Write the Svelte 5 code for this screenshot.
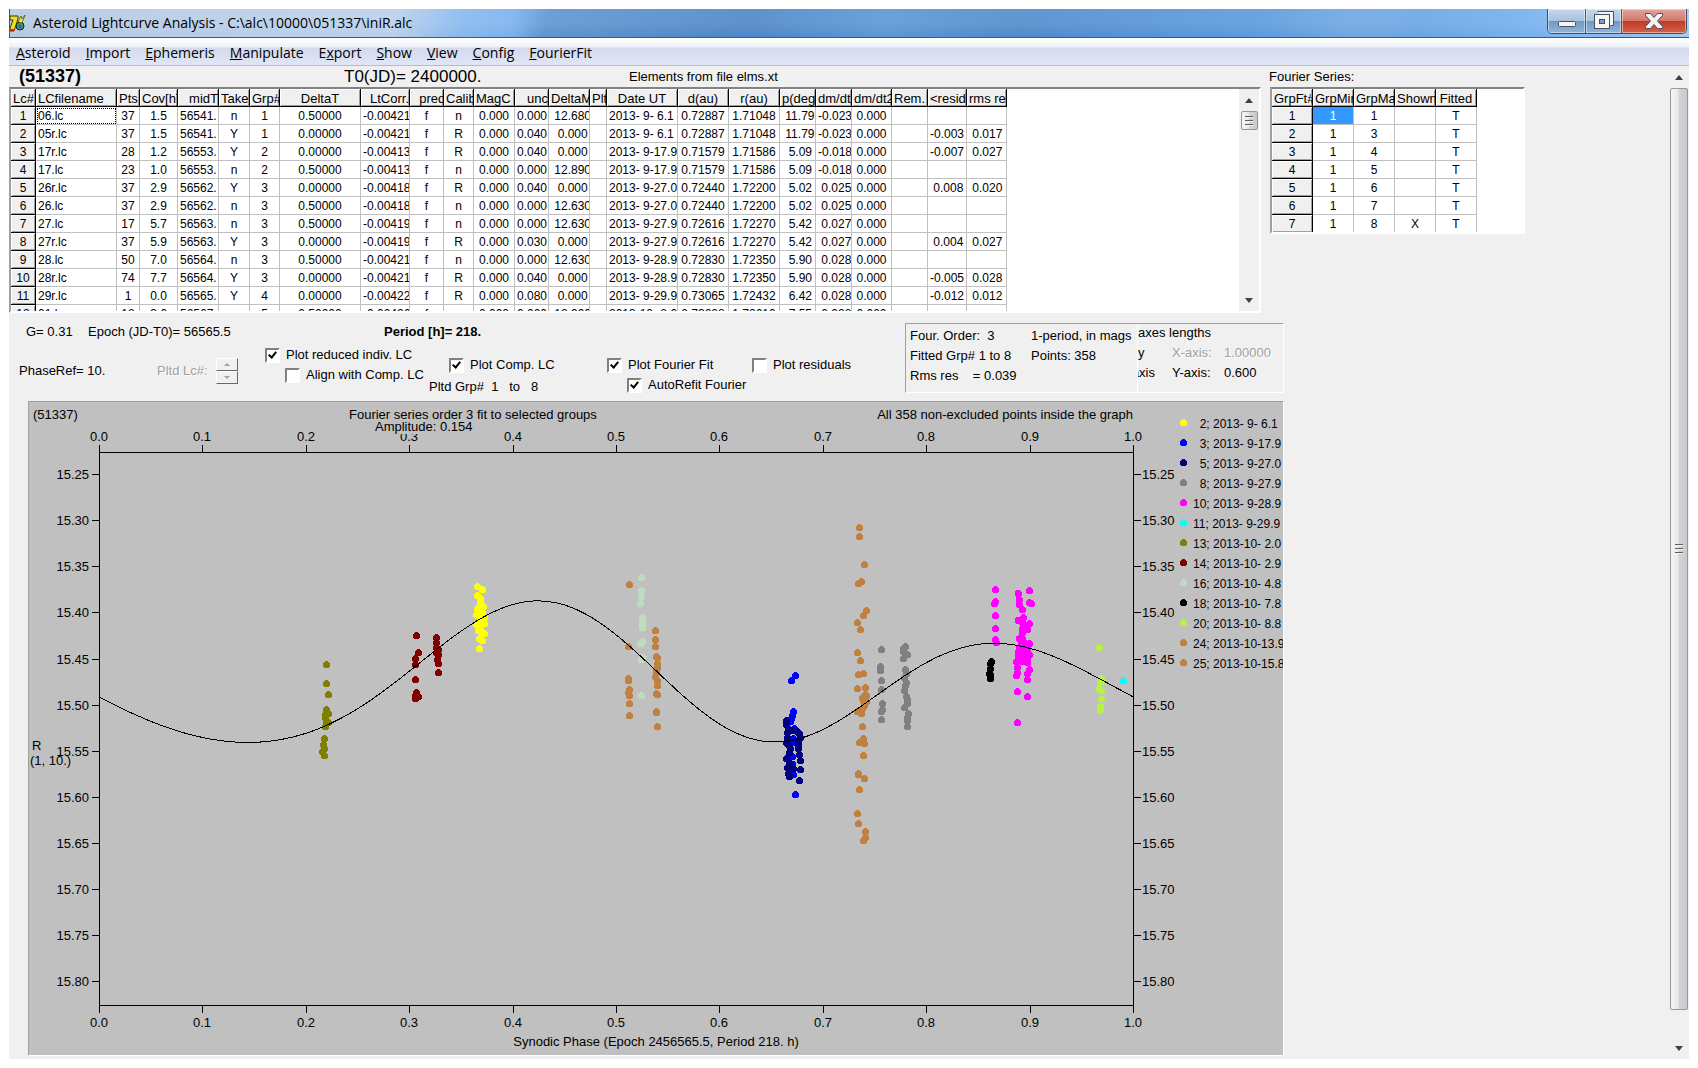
<script lang="ts">
    const menu = ["Asteroid", "Import", "Ephemeris", "Manipulate", "Export", "Show", "View", "Config", "FourierFit"];
    // index of the underlined accelerator letter in each menu entry
    const accel = [0, 0, 0, 0, 1, 0, 0, 0, 0];

    const lcCols = [
        { title: "Lc#", width: 25 },
        { title: "LCfilename", width: 81 },
        { title: "Pts", width: 23, align: "center" },
        { title: "Cov[h]", width: 38, align: "center" },
        { title: "midT", width: 41, head: "right" },
        { title: "Taken", width: 31, align: "center" },
        { title: "Grp#", width: 30, align: "center" },
        { title: "DeltaT", width: 81, align: "center", head: "center" },
        { title: "LtCorr.", width: 49, head: "right" },
        { title: "  pred", width: 34, align: "center" },
        { title: "Calib", width: 30, align: "center" },
        { title: "MagC", width: 41, align: "center" },
        { title: "unc", width: 34, head: "right" },
        { title: "DeltaM", width: 41 },
        { title: "Plt", width: 17 },
        { title: "Date UT", width: 71, head: "center" },
        { title: "d(au)", width: 51, align: "center", head: "center" },
        { title: "r(au)", width: 51, align: "center", head: "center" },
        { title: "p(deg)", width: 36 },
        { title: "dm/dt", width: 36 },
        { title: "dm/dt2", width: 40, align: "center" },
        { title: "Rem.", width: 36 },
        { title: "<resid>", width: 39 },
        { title: "rms res", width: 40 },
    ];

    const lcRows = [
        "1|06.lc|37|1.5|56541.|n|1|0.50000|-0.00421|f|n|0.000|0.000| 12.680||2013- 9- 6.1|0.72887|1.71048| 11.79|-0.023|0.000|||",
        "2|05r.lc|37|1.5|56541.|Y|1|0.00000|-0.00421|f|R|0.000|0.040|  0.000||2013- 9- 6.1|0.72887|1.71048| 11.79|-0.023|0.000||-0.003| 0.017",
        "3|17r.lc|28|1.2|56553.|Y|2|0.00000|-0.00413|f|R|0.000|0.040|  0.000||2013- 9-17.9|0.71579|1.71586|  5.09|-0.018|0.000||-0.007| 0.027",
        "4|17.lc|23|1.0|56553.|n|2|0.50000|-0.00413|f|n|0.000|0.000| 12.890||2013- 9-17.9|0.71579|1.71586|  5.09|-0.018|0.000|||",
        "5|26r.lc|37|2.9|56562.|Y|3|0.00000|-0.00418|f|R|0.000|0.040|  0.000||2013- 9-27.0|0.72440|1.72200|  5.02| 0.025|0.000|| 0.008| 0.020",
        "6|26.lc|37|2.9|56562.|n|3|0.50000|-0.00418|f|n|0.000|0.000| 12.630||2013- 9-27.0|0.72440|1.72200|  5.02| 0.025|0.000|||",
        "7|27.lc|17|5.7|56563.|n|3|0.50000|-0.00419|f|n|0.000|0.000| 12.630||2013- 9-27.9|0.72616|1.72270|  5.42| 0.027|0.000|||",
        "8|27r.lc|37|5.9|56563.|Y|3|0.00000|-0.00419|f|R|0.000|0.030|  0.000||2013- 9-27.9|0.72616|1.72270|  5.42| 0.027|0.000|| 0.004| 0.027",
        "9|28.lc|50|7.0|56564.|n|3|0.50000|-0.00421|f|n|0.000|0.000| 12.630||2013- 9-28.9|0.72830|1.72350|  5.90| 0.028|0.000|||",
        "10|28r.lc|74|7.7|56564.|Y|3|0.00000|-0.00421|f|R|0.000|0.040|  0.000||2013- 9-28.9|0.72830|1.72350|  5.90| 0.028|0.000||-0.005| 0.028",
        "11|29r.lc|1|0.0|56565.|Y|4|0.00000|-0.00422|f|R|0.000|0.080|  0.000||2013- 9-29.9|0.73065|1.72432|  6.42| 0.028|0.000||-0.012| 0.012",
        "12|01.lc|18|3.6|56567.|n|5|0.50000|-0.00426|f|n|0.000|0.000| 12.900||2013-10- 2.0|0.73628|1.72610|  7.55| 0.028|0.000|||",
    ].map((row) => row.split("|"));

    const fourierCols = ["GrpFt#", "GrpMin", "GrpMax", "Shown", "Fitted"];
    const fourierRows = [
        ["1", "1", "1", "", "T"],
        ["2", "1", "3", "", "T"],
        ["3", "1", "4", "", "T"],
        ["4", "1", "5", "", "T"],
        ["5", "1", "6", "", "T"],
        ["6", "1", "7", "", "T"],
        ["7", "1", "8", "X", "T"],
    ];

    const legend = [
        { label: "  2; 2013- 9- 6.1", color: "#ffff00" },
        { label: "  3; 2013- 9-17.9", color: "#0000ff" },
        { label: "  5; 2013- 9-27.0", color: "#000080" },
        { label: "  8; 2013- 9-27.9", color: "#808080" },
        { label: "10; 2013- 9-28.9", color: "#ff00ff" },
        { label: "11; 2013- 9-29.9", color: "#00ffff" },
        { label: "13; 2013-10- 2.0", color: "#808000" },
        { label: "14; 2013-10- 2.9", color: "#800000" },
        { label: "16; 2013-10- 4.8", color: "#c0dcc0" },
        { label: "18; 2013-10- 7.8", color: "#000000" },
        { label: "20; 2013-10- 8.8", color: "#b9f046" },
        { label: "24; 2013-10-13.9", color: "#c08040" },
        { label: "25; 2013-10-15.8", color: "#c08040" },
    ];

    // observations, in the units of the chart's viewBox
    const observations = [
        {
            color: "#ffff00",
            points: "477,586 482,589 477,595 480,598 480,602 480,605 483,606 477,608 480,611 482,612 476,614 479,616 484,617 480,620 483,621 476,624 484,623 480,626 478,630 481,631 484,633 479,638 482,640 479,648",
        },
        {
            color: "#0000ff",
            points: "795,675 791,680 793,711 792,715 791,718 790,721 794,728 793,738 792,742 792,756 792,764 793,774 795,794",
        },
        {
            color: "#000080",
            points: "786,720 786,724 788,728 793,730 797,731 799,733 800,737 787,732 787,737 786,742 788,744 790,748 798,741 798,745 798,748 789,752 799,754 800,760 786,758 789,762 787,767 791,768 793,768 800,769 788,773 789,776 799,780",
        },
        {
            color: "#808080",
            points: "881,649 880,666 880,670 881,680 881,689 882,703 882,709 881,711 881,719 905,646 903,648 903,651 907,654 903,658 905,669 906,673 904,677 906,682 905,685 904,690 906,696 907,699 907,703 904,707 908,713 907,717 907,720 907,726",
        },
        {
            color: "#ff00ff",
            points: "995,589 995,601 994,603 995,615 995,628 995,639 996,642 1018,593 1019,599 1019,604 1022,609 1029,590 1029,602 1031,603 1018,620 1023,617 1022,622 1029,623 1025,625 1022,628 1027,629 1022,632 1019,638 1022,638 1021,642 1025,643 1029,643 1019,647 1023,647 1027,648 1018,652 1023,652 1018,654 1022,656 1029,654 1018,657 1027,658 1016,661 1022,661 1027,662 1017,667 1029,669 1017,672 1027,673 1016,675 1027,679 1017,691 1027,696 1017,722",
        },
        { color: "#00ffff", points: "1123,680" },
        {
            color: "#808000",
            points: "326,664 326,683 328,694 326,709 325,714 328,713 325,717 326,721 328,722 325,726 324,738 323,744 324,748 322,751 324,755",
        },
        {
            color: "#800000",
            points: "416,635 418,652 415,658 415,664 415,679 416,692 415,695 418,696 415,698 436,637 436,642 436,647 438,649 436,652 438,654 437,659 438,663 438,672",
        },
        {
            color: "#c0dcc0",
            points: "641,577 641,590 641,596 640,603 642,617 642,621 642,625 642,627 642,641 640,643 642,657 641,659 641,695",
        },
        { color: "#000000", points: "991,661 990,663 990,668 989,673 990,674 990,678" },
        {
            color: "#b9f046",
            points: "1099,647 1101,678 1100,681 1102,681 1099,688 1101,690 1101,698 1100,706 1100,710",
        },
        {
            color: "#c08040",
            points: "629,584 628,646 628,678 628,680 629,689 628,692 629,695 629,703 629,715 655,630 655,639 655,646 656,656 657,657 657,663 657,667 656,669 656,671 655,676 657,680 657,685 656,693 657,694 656,711 656,712 657,726 859,527 859,536 864,564 861,581 858,583 866,610 863,615 857,622 860,629 857,652 860,660 858,674 863,673 865,687 857,688 865,694 866,695 862,697 863,700 866,701 864,705 862,708 857,711 859,710 861,713 862,726 863,738 859,742 864,743 863,755 858,773 858,774 864,778 859,789 857,813 858,823 865,831 865,837 863,840",
        },
    ];

    const plot = { left: 99, right: 1133, top: 452, bottom: 1005 };
    const xTicks = Array.from({ length: 11 }, (_, i) => i / 10);
    const yTicks = Array.from({ length: 12 }, (_, i) => 15.25 + i * 0.05);

    const px = (phase: number) => Math.round(plot.left + phase * (plot.right - plot.left));
    const py = (mag: number) => 474.3 + (mag - 15.25) * 921.3;

    // third order Fourier fit: [cos, sin] per harmonic
    const mean = 15.4779;
    const harmonics = [
        [0.02317, -0.00129],
        [-0.02008, 0.05948],
        [0.01047, -0.0078],
    ];

    function fit(phase: number) {
        return harmonics.reduce((sum, [a, b], i) => {
            const t = 2 * Math.PI * (i + 1) * phase;
            return sum + a * Math.cos(t) + b * Math.sin(t);
        }, mean);
    }

    const curve = Array.from({ length: 201 }, (_, i) => i / 200)
        .map((p) => `${(plot.left + p * (plot.right - plot.left)).toFixed(1)},${py(fit(p)).toFixed(1)}`)
        .join(" ");

    let reduced = $state(true);
    let align = $state(false);
    let comp = $state(true);
    let fourier = $state(true);
    let autoRefit = $state(true);
    let residuals = $state(false);
</script>

<div class="window">
    <header class="titlebar">
        <svg class="appIcon" width="16" height="20" viewBox="0 0 16 20">
            <path d="M0 3h8v3l-4 12H0v-3l3-8H0z" fill="#e8e020" stroke="#3a3a10" />
            <path d="M0 17h5" stroke="#c03020" stroke-width="2" />
            <circle cx="10" cy="13" r="4" fill="#3f9a5a" stroke="#123" />
            <path d="M9 12l2 3" stroke="#3050c0" stroke-width="2" />
            <path d="M8 9l3-6 1 3 3-4-3 8z" fill="#f4ec30" stroke="#444410" stroke-width=".7" />
        </svg>
        <span class="title">Asteroid Lightcurve Analysis - C:\alc\10000\051337\iniR.alc</span>
        <div class="winButtons">
            <button class="min" aria-label="Minimize">
                <svg width="20" height="20" viewBox="0 0 20 20">
                    <rect x="1.5" y="10.5" width="17" height="5" rx="1" fill="#f4f4f4" stroke="#4a5060" />
                </svg>
            </button>
            <button class="restore" aria-label="Restore">
                <svg width="20" height="20" viewBox="0 0 20 20">
                    <path d="M3.500 .5h16v14h-3" fill="#f4f4f4" stroke="#4a5060" />
                    <rect x=".5" y="3.500" width="15" height="14" fill="#f4f4f4" stroke="#4a5060" />
                    <rect x="5.500" y="8.500" width="5" height="4" fill="#7f9cc0" stroke="#4a5060" />
                </svg>
            </button>
            <button class="close" aria-label="Close">
                <svg width="20" height="18" viewBox="0 0 20 18">
                    <path
                        d="M1.500 1.500h5l3.500 4 3.500-4h5v2L13.500 9l5 5.500v2h-5l-3.500-4-3.500 4h-5v-2l5-5.500-5-5.500z"
                        fill="#f4f4f4"
                        stroke="#4a5060"
                    />
                </svg>
            </button>
        </div>
    </header>

    <nav class="menubar">
        {#each menu as item, i}
            <button>{item.slice(0, accel[i])}<u>{item[accel[i]]}</u>{item.slice(accel[i] + 1)}</button>
        {/each}
    </nav>

    <div class="client">
        <main>
            <div class="top">
                <section class="lightcurves">
                    <div class="heading">
                        <h1>(51337)</h1>
                        <span class="t0">T0(JD)= 2400000.</span>
                        <span>Elements from file elms.xt</span>
                    </div>
                    <div class="gridBox lcBox">
                        <div class="clip">
                            <table>
                                <colgroup>
                                    {#each lcCols as col}
                                        <col style:width={`${col.width}px`} />
                                    {/each}
                                </colgroup>
                                <thead>
                                    <tr>
                                        {#each lcCols as col}
                                            <th class={col.head}>{col.title}</th>
                                        {/each}
                                    </tr>
                                </thead>
                                <tbody>
                                    {#each lcRows as row, r}
                                        <tr>
                                            {#each row as cell, c}
                                                {#if c === 0}
                                                    <th class="center" scope="row">{cell}</th>
                                                {:else}
                                                    <td class={[lcCols[c].align, r === 0 && c === 1 && "focused"]}>{cell}</td>
                                                {/if}
                                            {/each}
                                        </tr>
                                    {/each}
                                </tbody>
                            </table>
                        </div>
                        <div class="scrollbar">
                            <span class="arrow up"></span>
                            <span class="thumb"><i></i></span>
                            <span class="arrow down"></span>
                        </div>
                    </div>
                </section>

                <section class="fourier">
                    <h2>Fourier Series:</h2>
                    <div class="gridBox fourierBox">
                        <div class="clip">
                            <table>
                                <colgroup>
                                    {#each fourierCols as _}
                                        <col class="fourierCol" />
                                    {/each}
                                </colgroup>
                                <thead>
                                    <tr>
                                        {#each fourierCols as col}
                                            <th class={col === "Fitted" ? "center" : ""}>{col}</th>
                                        {/each}
                                    </tr>
                                </thead>
                                <tbody>
                                    {#each fourierRows as row, r}
                                        <tr>
                                            <th class="center" scope="row">{row[0]}</th>
                                            {#each row.slice(1) as cell, c}
                                                <td class={["center", r === 0 && c === 0 && "selected"]}>{cell}</td>
                                            {/each}
                                        </tr>
                                    {/each}
                                </tbody>
                            </table>
                        </div>
                    </div>
                </section>
            </div>

            <div class="bottom">
                <div class="controls">
                    <div class="options">
                        <div class="summary">
                            <span class="g">G= 0.31</span>
                            <span class="epoch">Epoch (JD-T0)= 56565.5</span>
                            <b>Period [h]= 218.</b>
                        </div>
                        <div class="checks">
                            <div class="phase">
                                <span class="phaseRef">PhaseRef= 10.</span>
                                <span class="disabled">Pltd Lc#:</span>
                                <span class="spin">
                                    <button aria-label="Next lightcurve" disabled><i class="tri up"></i></button>
                                    <button aria-label="Previous lightcurve" disabled><i class="tri down"></i></button>
                                </span>
                            </div>
                            <div class="stack reduced">
                                <label><input type="checkbox" bind:checked={reduced} />Plot reduced indiv. LC</label>
                                <label class="indent"><input type="checkbox" bind:checked={align} />Align with Comp. LC</label>
                            </div>
                            <div class="stack comp">
                                <label class="indent"><input type="checkbox" bind:checked={comp} />Plot Comp. LC</label>
                                <span class="groups">Pltd Grp#  1   to   8</span>
                            </div>
                            <div class="stack fit">
                                <label><input type="checkbox" bind:checked={fourier} />Plot Fourier Fit</label>
                                <label class="indent"><input type="checkbox" bind:checked={autoRefit} />AutoRefit Fourier</label>
                            </div>
                            <div class="stack residuals">
                                <label><input type="checkbox" bind:checked={residuals} />Plot residuals</label>
                            </div>
                        </div>
                    </div>

                    <div class="info">
                        <div class="result">
                            <span>Four. Order:  3</span><span>1-period, in mags</span>
                            <span>Fitted Grp# 1 to 8</span><span>Points: 358</span>
                            <span>Rms res    = 0.039</span>
                        </div>
                        <div class="axes">
                            <span class="wide">axes lengths</span>
                            <span>y</span><span class="disabled">X-axis:</span><span class="disabled">1.00000</span>
                            <span class="cut">axis</span><span>Y-axis:</span><span>0.600</span>
                        </div>
                    </div>
                </div>

                <div class="graph">
                    <svg viewBox="29 402 1254 653">
                        <g class="axis">
                            <rect x="99.5" y="452.5" width="1034" height="553" fill="none" />
                            {#each xTicks as t}
                                <path d={`M${px(t) + 0.5} 445v7M${px(t) + 0.5} 1005v8`} />
                            {/each}
                            {#each yTicks as t}
                                <path d={`M92 ${Math.round(py(t)) + 0.5}h8M1133 ${Math.round(py(t)) + 0.5}h8`} />
                            {/each}
                        </g>

                        <text x="33" y="419">(51337)</text>
                        <text x="349" y="419">Fourier series order 3 fit to selected groups</text>
                        <text x="1133" y="419" text-anchor="end">All 358 non-excluded points inside the graph</text>

                        {#each xTicks as t}
                            <text x={px(t)} y="441" text-anchor="middle">{t.toFixed(1)}</text>
                            <text x={px(t)} y="1027" text-anchor="middle">{t.toFixed(1)}</text>
                        {/each}
                        {#each yTicks as t}
                            <text x="89" y={Math.round(py(t)) + 5} text-anchor="end">{t.toFixed(2)}</text>
                            <text x="1142" y={Math.round(py(t)) + 5}>{t.toFixed(2)}</text>
                        {/each}

                        <rect class="mask" x="373" y="420" width="101" height="14" />
                        <text x="375" y="431">Amplitude: 0.154</text>
                        <text x="32" y="750">R</text>
                        <text x="30" y="765">(1, 10.)</text>
                        <text x="656" y="1046" text-anchor="middle">Synodic Phase (Epoch 2456565.5, Period 218. h)</text>

                        {#each observations as obs}
                            <g fill={obs.color} class="dots">
                                {#each obs.points.split(" ") as point}
                                    {@const [cx, cy] = point.split(",").map(Number)}
                                    <circle cx={cx + 0.5} cy={cy + 0.5} r="3.5" />
                                {/each}
                            </g>
                        {/each}
                        <polyline class="curve" points={curve} />

                        {#each legend as entry, i}
                            <circle class="dots" cx="1183.5" cy={422.5 + i * 20} r="3.5" fill={entry.color} />
                            <text class="entry" x="1193" y={428 + i * 20}>{entry.label}</text>
                        {/each}
                    </svg>
                </div>
            </div>
        </main>

        <div class="scrollbar page">
            <span class="arrow up"></span>
            <span class="thumb"><i></i></span>
            <span class="arrow down"></span>
        </div>
    </div>
</div>

<style>
    :global(body) {
        background: #fff;
    }

    .window {
        box-sizing: border-box;
        display: flex;
        flex-direction: column;
        min-height: 100vh;
        padding: 9px;
        font: 13px/16px "Liberation Sans", Arial, sans-serif;
        color: #000;
    }

    button {
        margin: 0;
        padding: 0;
        border: none;
        background: none;
        color: inherit;
        font: inherit;
    }

    .titlebar {
        display: flex;
        align-items: center;
        gap: 9px;
        height: 29px;
        border-bottom: 1px solid #47586e;
        border-left: 1px solid #47586e;
        box-sizing: border-box;
        background:
            linear-gradient(rgba(255, 255, 255, 0.1), rgba(255, 255, 255, 0.1) 50%, transparent),
            linear-gradient(
                100deg,
                #b4c9e2 0,
                #b9cfea 23%,
                #86b7ee 27%,
                #7ab0ee 30%,
                #5d93cf 32%,
                #4d86c8 44%,
                #5b95d6 52%,
                #4f8acb 60%,
                #5a99dc 74%,
                #6fa6e2 80%,
                #6aa4e3 84%,
                #74aeee 90%,
                #a5c8ee 100%
            );
    }

    .appIcon {
        flex: none;
    }

    .title {
        flex: 1;
        margin-left: -2px;
        font: 14px/20px "Open Sans", "Noto Sans", sans-serif;
        white-space: nowrap;
    }

    .winButtons {
        display: flex;
        align-self: flex-start;
        margin-right: 2px;
        height: 24px;
        border: 1px solid #3f4d63;
        border-top: none;
        border-radius: 0 0 5px 5px;
        overflow: hidden;
    }

    .winButtons button {
        display: flex;
        justify-content: center;
        align-items: center;
        width: 38px;
        border-right: 1px solid #4a5a74;
        background: linear-gradient(#c3d6ec, #a9c3df 48%, #7397bf 50%, #8fb4dc);
        box-shadow: inset 0 0 0 1px rgba(255, 255, 255, 0.45);
    }

    .winButtons .restore {
        width: 36px;
    }

    .winButtons .close {
        width: 64px;
        border-right: none;
        background: linear-gradient(#e3a599, #d2796b 48%, #c13a22 50%, #d5614b);
    }

    .menubar {
        display: flex;
        gap: 15px;
        height: 27px;
        padding: 0 7px;
        border-bottom: 1px solid #b6bccc;
        background: linear-gradient(#fff, #eef1f9 9px, #d4daed 10px, #e1e6f6);
        font: 14px/29px "Open Sans", "Noto Sans", sans-serif;
    }

    .client {
        flex: 1;
        display: flex;
        background: #f0f0f0;
    }

    main {
        flex: 1;
        min-width: 0;
    }

    .top {
        display: flex;
        gap: 8px;
    }

    .lightcurves {
        flex: 1;
        min-width: 0;
    }

    .fourier {
        width: 400px;
    }

    .heading {
        display: flex;
        align-items: center;
        height: 21px;
        padding-left: 10px;
        white-space: pre;
    }

    h1 {
        width: 325px;
        margin: 0;
        font-size: 18px;
        line-height: 21px;
    }

    h2 {
        margin: 0;
        font-size: 13px;
        font-weight: 400;
        line-height: 21px;
    }

    .t0 {
        width: 285px;
        font-size: 17px;
    }

    .gridBox {
        display: flex;
        box-sizing: border-box;
        border: 2px solid;
        border-color: #828282 #fff #fff #a0a0a0;
        background: #fff;
        overflow: hidden;
    }

    .lcBox {
        height: 226px;
    }

    .fourierBox {
        width: 255px;
        height: 147px;
        margin-left: 1px;
    }

    .clip {
        flex: 1;
        min-width: 0;
        overflow: hidden;
    }

    table {
        width: 0;
        table-layout: fixed;
        border-spacing: 0;
    }

    .fourierCol {
        width: 41px;
    }

    td,
    th {
        box-sizing: border-box;
        height: 18px;
        padding: 2px 0 0 2px;
        border-right: 1px solid #c0c0c0;
        border-bottom: 1px solid #c0c0c0;
        overflow: hidden;
        font-size: 12px;
        font-weight: 400;
        line-height: 15px;
        text-align: left;
        white-space: pre;
    }

    th {
        background: #f0f0f0;
        border-color: #000;
        box-shadow:
            inset 1px 1px #fff,
            inset -1px -1px #a0a0a0;
    }

    thead th {
        font-size: 13px;
    }

    .center {
        padding-left: 0;
        text-align: center;
    }

    .right {
        text-align: right;
    }

    .focused {
        outline: 1px dotted #000;
        outline-offset: -2px;
    }

    .selected {
        background: #3399ff;
        color: #fff;
    }

    .scrollbar {
        display: flex;
        flex-direction: column;
        align-items: center;
        width: 20px;
        background: #f0f0f0;
    }

    .arrow {
        display: flex;
        justify-content: center;
        align-items: center;
        height: 22px;
    }

    .arrow::before,
    .tri::before {
        content: "";
        border: 4px solid transparent;
    }

    .arrow.up::before {
        border-top: none;
        border-bottom: 5px solid #404040;
    }

    .arrow.down::before {
        border-bottom: none;
        border-top: 5px solid #404040;
    }

    .thumb {
        display: flex;
        justify-content: center;
        align-items: center;
        box-sizing: border-box;
        width: 17px;
        height: 19px;
        border: 1px solid #979797;
        border-radius: 2px;
        background: linear-gradient(90deg, #f5f5f5, #e9e9eb 45%, #d3d4d7 50%, #c8c9cc);
    }

    .thumb i {
        width: 8px;
        height: 10px;
        background: repeating-linear-gradient(#5c5c5c 0 1px, #f5f5f5 1px 2px, transparent 2px 4px);
    }

    .scrollbar .down {
        margin-top: auto;
    }

    .page .thumb {
        flex: 1;
        margin-bottom: 27px;
        width: 18px;
    }

    .bottom {
        margin-right: 385px;
        padding-bottom: 3px;
    }

    .controls {
        display: flex;
        min-height: 88px;
        white-space: pre;
    }

    .options {
        display: flex;
        flex-direction: column;
        flex: 1;
        padding-top: 9px;
    }

    .summary {
        display: flex;
        line-height: 20px;
    }

    .g {
        width: 62px;
        padding-left: 17px;
    }

    .epoch {
        width: 296px;
    }

    .checks {
        display: flex;
        margin-top: 3px;
    }

    .phase {
        display: flex;
        align-items: center;
        box-sizing: border-box;
        width: 256px;
        height: 56px;
        padding: 2px 0 6px 10px;
    }

    .phaseRef {
        width: 138px;
    }

    .disabled {
        color: #a0a0a0;
        text-shadow: 1px 1px #fff;
    }

    .spin {
        display: flex;
        flex-direction: column;
        width: 22px;
        margin-left: auto;
        margin-right: 27px;
    }

    .spin button {
        display: flex;
        justify-content: center;
        align-items: center;
        height: 13px;
        border: 1px solid;
        border-color: #fff #696969 #696969 #fff;
        background: #f0f0f0;
    }

    .tri {
        display: flex;
    }

    .tri::before {
        border-width: 3px;
    }

    .tri.up::before {
        border-top: none;
        border-bottom-color: #a0a0a0;
    }

    .tri.down::before {
        border-bottom: none;
        border-top-color: #a0a0a0;
    }

    .stack {
        display: flex;
        flex-direction: column;
        box-sizing: border-box;
    }

    .reduced {
        width: 164px;
    }

    .comp {
        width: 178px;
        padding-top: 10px;
    }

    .fit {
        width: 145px;
        padding-top: 10px;
    }

    .residuals {
        padding-top: 10px;
    }

    label {
        display: flex;
        align-items: center;
        gap: 6px;
        height: 20px;
    }

    .indent {
        padding-left: 20px;
    }

    .groups {
        padding-top: 4px;
    }

    input[type="checkbox"] {
        appearance: none;
        position: relative;
        width: 15px;
        height: 15px;
        margin: 0;
        border: 2px solid;
        border-color: #808080 #fff #fff #808080;
        box-sizing: border-box;
        background: #fff;
    }

    /* tick mark */
    input:checked::after {
        content: "";
        position: absolute;
        left: 3px;
        top: 0;
        width: 3px;
        height: 6px;
        border: solid #000;
        border-width: 0 2px 2px 0;
        transform: rotate(40deg);
    }

    .info {
        display: flex;
        box-sizing: border-box;
        width: 379px;
        height: 70px;
        margin-top: 10px;
        border: 1px solid;
        border-color: #a0a0a0 #fff #fff #a0a0a0;
    }

    .result {
        display: grid;
        grid-template-columns: 121px 1fr;
        grid-auto-rows: 20px;
        flex: 1;
        padding: 4px 0 0 4px;
        border-right: 1px solid #fff;
    }

    .axes {
        display: grid;
        grid-template-columns: 34px 52px 1fr;
        grid-auto-rows: 20px;
        width: 145px;
        padding-top: 1px;
    }

    .wide {
        grid-column: 1 / -1;
    }

    /* half hidden behind the result panel */
    .cut {
        display: flex;
        justify-content: flex-end;
        width: 17px;
        overflow: hidden;
    }

    .graph {
        border: 1px solid;
        border-color: #a0a0a0 #fff #fff #a0a0a0;
        margin-left: 19px;
        background: #c0c0c0;
    }

    .graph svg {
        display: block;
        width: 100%;
    }

    text {
        font-size: 13px;
        white-space: pre;
    }

    .entry {
        font-size: 12px;
    }

    .axis,
    .curve {
        fill: none;
        stroke: #000;
        shape-rendering: crispEdges;
    }

    .dots {
        shape-rendering: crispEdges;
    }

    .mask {
        fill: #c0c0c0;
    }
</style>
